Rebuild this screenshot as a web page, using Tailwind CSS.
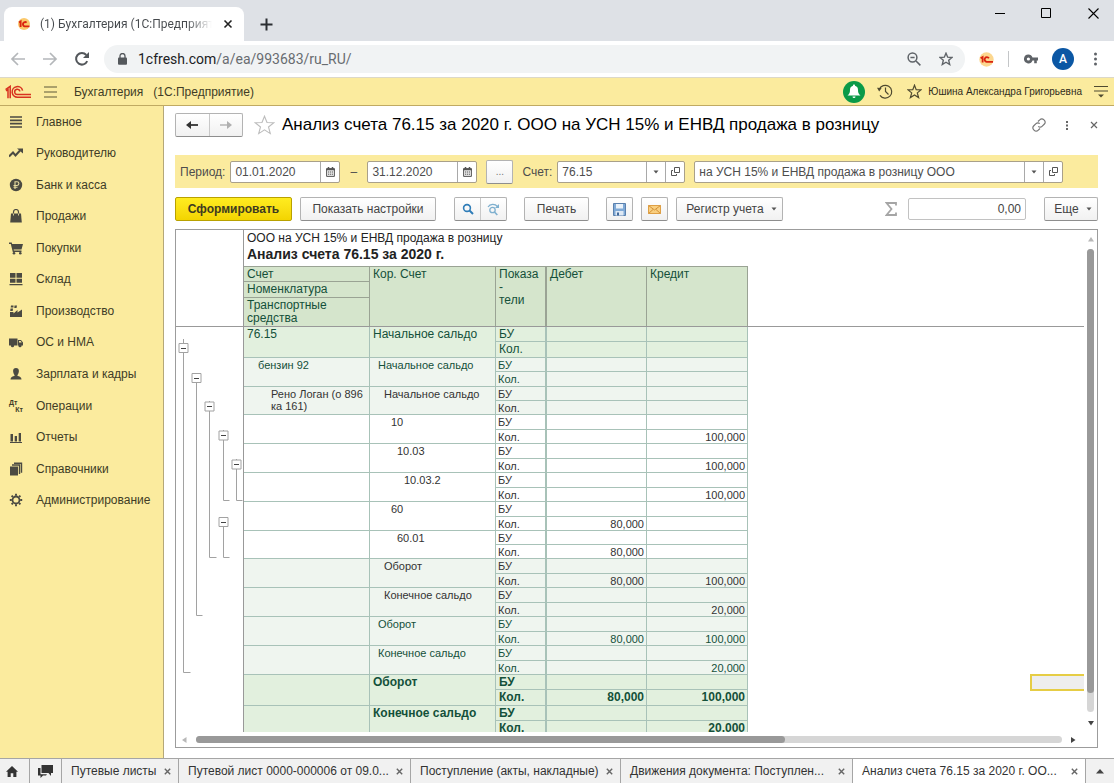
<!DOCTYPE html>
<html lang="ru">
<head>
<meta charset="utf-8">
<title>Анализ счета 76.15</title>
<script src="https://cdn.jsdelivr.net/npm/@tailwindcss/browser@4"></script>
</head>
<body class="flex h-screen flex-col overflow-hidden bg-white font-['Liberation_Sans',Arial,sans-serif] text-[13px] text-[#444]">

<!-- Browser tab strip -->
<div class="flex h-[41px] shrink-0 items-end bg-[#dee1e6] pl-1 font-[Roboto,sans-serif]">
  <div class="flex h-[34px] w-60 items-center rounded-t-lg bg-white pl-3.5 pr-2.5 text-xs text-[#45494d]">
    <svg class="mr-2.5 shrink-0" width="12" height="12" viewBox="0 0 12 12"><circle cx="6" cy="6" r="6" fill="#fbc96b"/><path d="M1 4.500 2.600 3.500V9M8.600 4.600A2.200 2.200 0 1 0 6.600 8.400H11.500" fill="none" stroke="#d9230f" stroke-width="1.900"/></svg>
    <span class="flex-1 overflow-hidden whitespace-nowrap bg-linear-to-r from-[#45494d] from-85% to-transparent bg-clip-text text-transparent">(1) Бухгалтерия (1С:Предприятие)</span>
    <button class="ml-2.5" aria-label="Закрыть вкладку"><svg width="12" height="12" viewBox="0 0 12 12"><path d="m2.500 2.500 7 7m0-7-7 7" stroke="#222" stroke-width="1.600"/></svg></button>
  </div>
  <button class="mb-[10px] ml-4" aria-label="Новая вкладка"><svg width="13" height="13" viewBox="0 0 13 13"><path d="M6.500.500v12m-6-6h12" stroke="#2b2e32" stroke-width="2"/></svg></button>
  <div class="mb-[22px] ml-auto mr-[15px] flex items-center gap-9">
    <button aria-label="Свернуть"><svg width="10" height="11" viewBox="0 0 10 11"><path d="M0 5.500h10" stroke="#000"/></svg></button>
    <button aria-label="Развернуть"><svg width="11" height="11" viewBox="0 0 11 11"><path d="M.5.500h9v9h-9z" fill="none" stroke="#000"/></svg></button>
    <button aria-label="Закрыть"><svg width="11" height="11" viewBox="0 0 11 11"><path d="m.5.500 10 10m0-10-10 10" stroke="#000" stroke-width="1.100"/></svg></button>
  </div>
</div>

<!-- Address bar -->
<div class="flex h-9 shrink-0 items-center pl-[10px] pr-3 font-[Roboto,sans-serif]">
  <button aria-label="Назад"><svg width="16" height="16" viewBox="0 0 16 16"><path d="M15 8H2m6-6L2 8l6 6" fill="none" stroke="#b4b7ba" stroke-width="1.700"/></svg></button>
  <button class="ml-4" aria-label="Вперед"><svg width="16" height="16" viewBox="0 0 16 16"><path d="M1 8h13M8 2l6 6-6 6" fill="none" stroke="#b4b7ba" stroke-width="1.700"/></svg></button>
  <button class="ml-4" aria-label="Обновить"><svg width="16" height="16" viewBox="0 0 16 16"><path d="M13.200 10.200A5.800 5.800 0 1 1 12.300 4" fill="none" stroke="#53575b" stroke-width="2"/><path d="M15 1v6H9z" fill="#53575b"/></svg></button>
  <label class="ml-[14px] flex h-7 flex-1 items-center rounded-full bg-[#f1f3f4] pl-3.5 pr-3">
    <svg class="mr-[11px]" width="9" height="12" viewBox="0 0 9 12"><rect y="4.400" width="9" height="7.400" rx="1" fill="#54585c"/><path d="M2 5V3a2.500 2.500 0 0 1 5 0v2" fill="none" stroke="#54585c" stroke-width="1.300"/></svg>
    <span class="flex-1 text-sm text-[#686c70]"><span class="text-[#202124]">1cfresh.com</span>/a/ea/993683/ru_RU/</span>
    <svg width="14" height="14" viewBox="0 0 14 14" fill="none" stroke="#5f6368" stroke-width="1.500"><circle cx="5.500" cy="5.500" r="4.400"/><path d="m9 9 4.400 4.400M3.400 5.500h4.200"/></svg>
    <svg class="ml-[18px]" width="14" height="14" viewBox="0 0 14 14"><path d="m7 1.200 1.700 4 4.300.3-3.300 2.800 1 4.200L7 10.200l-3.700 2.300 1-4.200L1 5.500l4.300-.3z" fill="none" stroke="#5f6368" stroke-width="1.400"/></svg>
  </label>
  <svg class="ml-[14px]" width="15" height="15" viewBox="0 0 15 15"><circle cx="7.500" cy="7.500" r="7.200" fill="#fcd78f"/><path d="M1.600 6.200 3.600 5v5.400M9.900 6.300a2.300 2.300 0 1 0-2.200 3.500H14" fill="none" stroke="#d9230f" stroke-width="1.800"/></svg>
  <span class="ml-[14px] h-4 w-px bg-[#c4c6c8]"></span>
  <svg class="ml-[15px]" width="14" height="10" viewBox="0 0 14 10"><path fill-rule="evenodd" d="M4.400.6a4.400 4.400 0 1 0 4.100 5.900h1.700v2.700h2.600V6.500H14v-3H8.500A4.400 4.400 0 0 0 4.400.6M4.400 3.400a1.600 1.600 0 1 1 0 3.200 1.600 1.600 0 0 1 0-3.200" fill="#5f6368"/></svg>
  <button class="ml-[14px] size-[22px] rounded-full bg-[#0b57a4] text-xs font-medium text-white">A</button>
  <button class="ml-[17px]" aria-label="Меню"><svg width="11" height="14" viewBox="0 0 11 14" fill="#5f6368"><circle cx="4.500" cy="2" r="1.500"/><circle cx="4.500" cy="7" r="1.500"/><circle cx="4.500" cy="12" r="1.500"/></svg></button>
</div>

<!-- Application header -->
<header class="flex h-[29px] shrink-0 items-center border-b border-t border-b-[#c0aa62] border-t-[#dcd8c8] bg-[#fbeb9e] pl-[5px] pr-[6px]">
  <svg width="26" height="14" viewBox="0 0 26 14" fill="none" stroke="#d8321f" stroke-width="1.500"><path d="M.5 4.500 5.200 1.300V13.300M1 5.800 3 4.600V13.300"/><path d="M17.600 5.600A5.300 5.300 0 1 0 12.600 12.200H26"/><path d="M15 6.300A2.700 2.700 0 1 0 12.600 9.600H26"/></svg>
  <button class="ml-[13px]" aria-label="Меню функций"><svg width="13" height="12" viewBox="0 0 13 12"><path d="M0 1h13M0 6h13M0 11h13" stroke="#5d5838" stroke-width="1.200"/></svg></button>
  <span class="ml-[17px] text-xs text-[#403c26]">Бухгалтерия&nbsp;&nbsp; (1С:Предприятие)</span>
  <button class="ml-auto flex size-[22px] items-center justify-center rounded-full bg-[#0a9a48]" aria-label="Уведомления"><svg width="14" height="15" viewBox="0 0 14 15" fill="#fff"><path d="M7 .5c.8 0 1 .6 1 1.200 2.200.6 3 2.300 3 4.300 0 3 .8 4 2.500 5.500H.5C2.200 10 3 9 3 6c0-2 .8-3.700 3-4.300C6 1.100 6.200.5 7 .5M5.500 12.500h3a1.500 1.500 0 0 1-3 0"/></svg></button>
  <button class="ml-3" aria-label="История"><svg width="16" height="15" viewBox="0 0 16 15" fill="none" stroke="#4f4a30" stroke-width="1.200"><path d="M2.300 5.500A6.400 6.400 0 1 1 3 11.300M8.500 3.500v4l3 3"/><path d="M0 3.800 4.600 4 2.200 7.400z" fill="#4f4a30" stroke="none"/></svg></button>
  <button class="ml-[14px]" aria-label="Избранное"><svg width="15" height="15" viewBox="0 0 15 15"><path d="m7.500 1.200 1.700 4.500 4.800.2-3.700 3 1.300 4.700-4.100-2.700-4.100 2.700 1.300-4.700-3.700-3 4.800-.2z" fill="none" stroke="#4f4a30" stroke-width="1.200"/></svg></button>
  <span class="ml-[6px] text-[10px] text-[#2f2b1b]">Юшина Александра Григорьевна</span>
  <button class="ml-[12px]" aria-label="Настройки"><svg width="14" height="13" viewBox="0 0 14 13"><path d="M0 1.500h14M0 6h14" stroke="#4f4a30" stroke-width="1.200"/><path d="M4 9.500h6l-3 3z" fill="#4f4a30"/></svg></button>
</header>

<div class="flex min-h-0 flex-1">
  <!-- Sections -->
  <nav class="w-[164px] shrink-0 border-r border-[#b5a878] bg-[#fbeb9e] text-xs text-[#403c26]">
    <div class="flex h-[410px] flex-col [&>a]:flex [&>a]:flex-1 [&>a]:items-center [&>a]:gap-[13px] [&>a]:pl-[9px] [&_svg]:shrink-0">
      <a href="#"><svg width="14" height="14" viewBox="0 0 14 14"><path d="M1 2h12M1 5.300h12M1 8.600h12M1 12h12" stroke="#4b4a42" stroke-width="1.700"/></svg>Главное</a>
      <a href="#"><svg width="14" height="14" viewBox="0 0 14 14"><path d="m0 10.500 4-4 2.500 3L11 4.500" fill="none" stroke="#4b4a42" stroke-width="2"/><path d="M8 2.500h6v5z" fill="#4b4a42"/></svg>Руководителю</a>
      <a href="#"><svg width="14" height="14" viewBox="0 0 14 14"><circle cx="7" cy="7" r="6.200" fill="#4b4a42"/><path d="M6 11V3.700h2a1.900 1.900 0 0 1 0 3.800H4.500M4.500 9.200h4" fill="none" stroke="#e8dca0" stroke-width="1.100"/></svg>Банк и касса</a>
      <a href="#"><svg width="14" height="14" viewBox="0 0 14 14"><path d="M2 4.500h10l.8 9H1.200z" fill="#4b4a42"/><path d="M4.500 6.500V3a2.500 2.500 0 0 1 5 0v3.500" fill="none" stroke="#4b4a42" stroke-width="1.200"/><path d="M4.500 4.500v2M9.500 4.500v2" stroke="#d8cc94"/></svg>Продажи</a>
      <a href="#"><svg width="14" height="14" viewBox="0 0 14 14" fill="#4b4a42"><path d="M0 1.500h2.700l.5 1.500H14l-1.500 5.500H4.600l.3 1h7.600V11H3.800L1.800 3H0z"/><circle cx="5" cy="12.300" r="1.300"/><circle cx="11.300" cy="12.300" r="1.300"/></svg>Покупки</a>
      <a href="#"><svg width="14" height="14" viewBox="0 0 14 14" fill="#4b4a42"><path d="M1 1h5.500v4.700H1zM7.500 1H13v4.700H7.500zM1 6.700h5.500v4H1zM7.500 6.700H13v4H7.500zM.5 12h13v1.300H.5z"/></svg>Склад</a>
      <a href="#"><svg width="14" height="14" viewBox="0 0 14 14" fill="#4b4a42"><path d="M1 8h3.500v1.500L8.500 6v2.500L13 5.500V13H1zM1.500 4.500h2.500l-.3 2.500H1.200zM2 1.500h2.500v2H1.700zM5.500 1.500H8L7.500 4H5.300z"/></svg>Производство</a>
      <a href="#"><svg width="14" height="14" viewBox="0 0 14 14" fill="#4b4a42"><path d="M0 3.500h8.500v7H0zM9 5h3l2 2.500v3H9z"/><circle cx="3.500" cy="10.700" r="1.600"/><circle cx="11" cy="10.700" r="1.600"/><path d="M10 6h1.700l1 1.500H10z" fill="#fbeb9e"/></svg>ОС и НМА</a>
      <a href="#"><svg width="14" height="14" viewBox="0 0 14 14" fill="#4b4a42"><path d="M7 1c1.900 0 2.900 1.300 2.900 3S8.900 7.600 8.500 8v1c2 .3 4 1 4 3.500h-11C1.500 10 3.500 9.300 5.500 9V8C5.100 7.600 4.100 5.700 4.100 4S5.100 1 7 1"/></svg>Зарплата и кадры</a>
      <a href="#"><span class="flex w-3.5 flex-col text-[7px]/[7px] font-bold"><span>Дт</span><span class="self-end">Кт</span></span>Операции</a>
      <a href="#"><svg width="14" height="14" viewBox="0 0 14 14" fill="#4b4a42"><path d="M1.500 4H4v7.500H1.500zM5.700 6H8v5.500H5.700zM9.700 3H12v8.500H9.700zM1 12h12v1H1z"/></svg>Отчеты</a>
      <a href="#"><svg width="14" height="14" viewBox="0 0 14 14"><path d="M1 4.500h8v9H1z" fill="#4b4a42"/><path d="M3 3h7.500v9M5 1.200h7.500v9.500" fill="none" stroke="#4b4a42" stroke-width="1.400"/></svg>Справочники</a>
      <a href="#"><svg width="14" height="14" viewBox="0 0 14 14" fill="none" stroke="#4b4a42"><circle cx="7" cy="7" r="3.500" stroke-width="1.800"/><path d="M7 .8v2M7 11.200v2M.8 7h2M11.200 7h2M2.600 2.600 4 4M10 10l1.400 1.400M2.600 11.400 4 10M10 4l1.400-1.400" stroke-width="1.900"/></svg>Администрирование</a>
    </div>
  </nav>

  <main class="flex min-w-0 flex-1 flex-col pb-[10px] pl-[11px] pr-4">
    <!-- Form title -->
    <div class="flex h-[38px] shrink-0 items-center">
      <div class="flex h-6 w-[68px] rounded-xs border border-[#b3b3b3] border-b-[#8e8e8e] bg-linear-to-b from-white to-[#f1f1f1]">
        <button class="flex flex-1 items-center justify-center border-r border-[#c8c8c8]" aria-label="Назад"><svg width="12" height="8" viewBox="0 0 12 8"><path d="M12 4H2" stroke="#333" stroke-width="1.800"/><path d="M5 0v8L0 4z" fill="#333"/></svg></button>
        <button class="flex flex-1 items-center justify-center" aria-label="Вперед"><svg width="12" height="8" viewBox="0 0 12 8"><path d="M0 4h10" stroke="#b0b0b0" stroke-width="1.400"/><path d="M7 0v8l5-4z" fill="#b0b0b0"/></svg></button>
      </div>
      <button class="ml-[11px]" aria-label="В избранное"><svg width="21" height="20" viewBox="0 0 21 20"><path d="m10.500 1.200 2.500 6.300 6.800.3-5.300 4.200 1.800 6.600-5.800-3.800-5.800 3.800L6.500 12 1.200 7.800 8 7.500z" fill="none" stroke="#bdbdbd" stroke-width="1.100"/></svg></button>
      <h1 class="ml-[7px] whitespace-nowrap text-[17px] text-black">Анализ счета 76.15 за 2020 г. ООО на УСН 15% и ЕНВД продажа в розницу</h1>
      <button class="ml-auto" aria-label="Ссылка"><svg width="14" height="14" viewBox="0 0 14 14" fill="none" stroke="#777" stroke-width="1.200"><path d="M6 3.500 8 1.600a2.600 2.600 0 0 1 3.700 0l.7.700a2.600 2.600 0 0 1 0 3.700L10 8.400a2.600 2.600 0 0 1-3.700 0"/><path d="M8 10.500l-2 1.900a2.600 2.600 0 0 1-3.700 0l-.7-.7a2.600 2.600 0 0 1 0-3.700L4 5.600a2.600 2.600 0 0 1 3.700 0"/></svg></button>
      <button class="ml-[18px]" aria-label="Еще действия"><svg width="6" height="11" viewBox="0 0 6 11" fill="#666"><path d="M2 1h2v2H2zM2 4.500h2v2H2zM2 8h2v2H2z"/></svg></button>
      <button class="ml-5" aria-label="Закрыть"><svg width="8" height="8" viewBox="0 0 8 8"><path d="m1 1 6 6m0-6-6 6" stroke="#666" stroke-width="1.200"/></svg></button>
    </div>

    <!-- Filter -->
    <div class="mt-[11px] flex h-[33px] shrink-0 items-center bg-[#fbeb9e] pl-[5px] pr-[35px] text-xs text-[#4d4d4d] [&_input]:min-w-0 [&_input]:flex-1 [&_input]:pl-1 [&_input]:outline-none">
      <label for="d1">Период:</label>
      <div class="ml-[5px] flex h-[22px] w-[110px] rounded-xs border border-[#a9a08a] bg-white">
        <input id="d1" value="01.01.2020">
        <button class="flex w-[19px] items-center justify-center border-l border-[#a9a9a9]" aria-label="Календарь"><svg width="9" height="10" viewBox="0 0 9 10"><path d="M.6 1.600h7.800v7.800H.6z" fill="#eee" stroke="#555" stroke-width="1"/><path d="M0 2.500h9M2.500 0v2M6.500 0v2" stroke="#555" stroke-width="1.500"/><path d="M2 5h5M2 7.200h5" stroke="#555" stroke-dasharray="1.200 .7"/></svg></button>
      </div>
      <span class="w-[27px] text-center">–</span>
      <div class="flex h-[22px] w-[110px] rounded-xs border border-[#a9a08a] bg-white">
        <input id="d2" aria-label="Конец периода" value="31.12.2020">
        <button class="flex w-[19px] items-center justify-center border-l border-[#a9a9a9]" aria-label="Календарь"><svg width="9" height="10" viewBox="0 0 9 10"><path d="M.6 1.600h7.800v7.800H.6z" fill="#eee" stroke="#555" stroke-width="1"/><path d="M0 2.500h9M2.500 0v2M6.500 0v2" stroke="#555" stroke-width="1.500"/><path d="M2 5h5M2 7.200h5" stroke="#555" stroke-dasharray="1.200 .7"/></svg></button>
      </div>
      <button class="ml-[9px] h-6 w-[27px] rounded-xs border border-[#b3b3b3] border-b-[#8e8e8e] bg-linear-to-b from-white to-[#f1f1f1] text-[10px] text-[#777]">...</button>
      <label class="ml-[9px]" for="acc">Счет:</label>
      <div class="ml-[5px] flex h-[22px] w-[128px] rounded-xs border border-[#a9a08a] bg-white">
        <input id="acc" value="76.15">
        <button class="flex w-[19px] items-center justify-center border-l border-[#a9a9a9]" aria-label="Выбрать"><svg width="6" height="4" viewBox="0 0 6 4"><path d="M.5.500h5L3 3.500z" fill="#555"/></svg></button>
        <button class="flex w-[19px] items-center justify-center border-l border-[#a9a9a9]" aria-label="Открыть"><svg width="9" height="9" viewBox="0 0 9 9" fill="none" stroke="#555"><path d="M3.500.500h5v5h-5z"/><path d="M2 3.500H.5v5h5V7"/></svg></button>
      </div>
      <div class="ml-[9px] flex h-[22px] min-w-0 flex-1 rounded-xs border border-[#a9a08a] bg-white">
        <input id="org" aria-label="Организация" value="на УСН 15% и ЕНВД продажа в розницу ООО">
        <button class="flex w-[19px] items-center justify-center border-l border-[#a9a9a9]" aria-label="Выбрать"><svg width="6" height="4" viewBox="0 0 6 4"><path d="M.5.500h5L3 3.500z" fill="#555"/></svg></button>
        <button class="flex w-[19px] items-center justify-center border-l border-[#a9a9a9]" aria-label="Открыть"><svg width="9" height="9" viewBox="0 0 9 9" fill="none" stroke="#555"><path d="M3.500.500h5v5h-5z"/><path d="M2 3.500H.5v5h5V7"/></svg></button>
      </div>
    </div>

    <!-- Commands -->
    <div class="mt-[9px] flex h-6 shrink-0 text-xs">
      <button class="w-[117px] rounded-xs border border-[#b9a100] bg-linear-to-b from-[#ffec1f] to-[#f3d400] font-bold text-[#3d3a20]">Сформировать</button>
      <button class="ml-2 w-[136px] rounded-xs border border-[#b3b3b3] border-b-[#8e8e8e] bg-linear-to-b from-white to-[#f1f1f1]">Показать настройки</button>
      <div class="ml-[18px] flex w-[53px] rounded-xs border border-[#b3b3b3] border-b-[#8e8e8e] bg-linear-to-b from-white to-[#f1f1f1]">
        <button class="flex flex-1 items-center justify-center border-r border-[#c8c8c8]" aria-label="Найти"><svg width="12" height="12" viewBox="0 0 12 12" fill="none" stroke="#2f7db8"><circle cx="5" cy="5" r="3.400" stroke-width="1.600"/><path d="m7.500 7.500 3.500 3.500" stroke-width="2"/></svg></button>
        <button class="flex flex-1 items-center justify-center" aria-label="Найти далее"><svg width="13" height="13" viewBox="0 0 13 13" fill="none" stroke="#7fb0cf"><circle cx="5.500" cy="7" r="2.700" stroke-width="1.300"/><path d="m7.500 9 2.800 3" stroke-width="1.600"/><path d="M1 4c2-3.500 7-3.500 9.500-.5" stroke-width="1.200"/><path d="M12 1v4H8z" fill="#7fb0cf" stroke="none"/></svg></button>
      </div>
      <button class="ml-[17px] w-[65px] rounded-xs border border-[#b3b3b3] border-b-[#8e8e8e] bg-linear-to-b from-white to-[#f1f1f1]">Печать</button>
      <button class="ml-[17px] flex w-[27px] items-center justify-center rounded-xs border border-[#b3b3b3] border-b-[#8e8e8e] bg-linear-to-b from-white to-[#f1f1f1]" aria-label="Сохранить"><svg width="13" height="13" viewBox="0 0 13 13"><path d="M.5.500h12v12H.5z" fill="#7fa9d6" stroke="#5a80ad"/><path d="M3 1h7v4.500H3z" fill="#eaf2fa"/><path d="M2.500 8h8v4.500h-8z" fill="#dfe9f4"/><path d="M4 9.500h2v3H4z" fill="#41699a"/></svg></button>
      <button class="ml-2 flex w-[27px] items-center justify-center rounded-xs border border-[#b3b3b3] border-b-[#8e8e8e] bg-linear-to-b from-white to-[#f1f1f1]" aria-label="Отправить"><svg width="13" height="9" viewBox="0 0 13 9"><path d="M.5.500h12v8H.5z" fill="#f9cf80" stroke="#dfa045"/><path d="m.5.500 6 4.500 6-4.500M.5 8.500l4.500-4M12.500 8.500 8 4.500" fill="none" stroke="#d3923a"/></svg></button>
      <button class="ml-2 flex w-[107px] items-center justify-center gap-[7px] rounded-xs border border-[#b3b3b3] border-b-[#8e8e8e] bg-linear-to-b from-white to-[#f1f1f1] pl-1">Регистр учета <svg width="6" height="4" viewBox="0 0 6 4"><path d="M.5.500h5L3 3.500z" fill="#555"/></svg></button>
      <label for="sum" class="ml-auto self-center" aria-label="Сумма"><svg width="12" height="14" viewBox="0 0 12 14"><path d="M11 3.500V1H1.500l5 6-5 6H11v-2.500" fill="none" stroke="#a5a5a5" stroke-width="1.800"/></svg></label>
      <input id="sum" class="ml-[11px] h-[22px] w-[118px] self-center rounded-xs border border-[#c2c2c2] pr-1 text-right outline-none" value="0,00">
      <button class="ml-[18px] flex w-[54px] items-center justify-center gap-[7px] rounded-xs border border-[#b3b3b3] border-b-[#8e8e8e] bg-linear-to-b from-white to-[#f1f1f1] pl-1">Еще <svg width="6" height="4" viewBox="0 0 6 4"><path d="M.5.500h5L3 3.500z" fill="#555"/></svg></button>
    </div>

    <!-- Spreadsheet -->
    <div class="mt-2 flex min-h-0 flex-1 flex-col border border-[#9c9c9c]">
      <div class="flex min-h-0 flex-1">
        <div class="relative flex min-w-0 flex-1 items-start overflow-hidden">
          <!-- Row grouping tree -->
          <svg class="shrink-0" width="67" height="502" viewBox="0 0 67 502" fill="none" stroke="#a2a2a2">
            <path d="M7.500 109v333.500h7M20.500 143v242.500h6M33.500 171v156.500h7M47.500 200v70.500h6M60.500 229v41.500h6M47.500 287v40.500h6"/>
            <g fill="#fff"><path d="M3 113.500h9v9H3zM16 143.500h9v9h-9zM29 172h9v9h-9zM43 201h9v9h-9zM56 230h9v9h-9zM43 287.500h9v9h-9z"/></g>
            <path d="M5 118.500h5M18 148.500h5M31 176.500h5M45 205.500h5M58 234.500h5M45 292.500h5" stroke="#444"/>
          </svg>
          <div class="shrink-0 border-l border-[#999]">
            <div class="h-9 pl-[3px] text-[#222]">
              <p class="text-xs/4">ООО на УСН 15% и ЕНВД продажа в розницу</p>
              <p class="text-sm/4 font-bold">Анализ счета 76.15 за 2020 г.</p>
            </div>
            <table class="w-[504px] table-fixed border-separate border-spacing-0 text-left text-[11px]/[12px] text-[#333] [&_td]:border-b [&_td]:border-r [&_td]:border-[#a8c2b8] [&_td]:pb-0 [&_td]:pl-0.5 [&_td]:pr-0.5 [&_td]:pt-px [&_td]:align-top [&_th]:border-b [&_th]:border-r [&_th]:border-[#9aa394] [&_th]:pb-0 [&_th]:pl-[3px] [&_th]:pr-0 [&_th]:pt-px [&_th]:align-top [&_th]:font-normal">
              <colgroup><col class="w-[126px]"><col class="w-[126px]"><col class="w-[51px]"><col class="w-[100px]"><col class="w-[101px]"></colgroup>
              <thead class="bg-[#d5e5cc] text-xs/[13px] text-[#14503a]">
                <tr class="h-4 [&>th]:border-t"><th>Счет</th><th rowspan="3">Кор. Счет</th><th rowspan="3" class="border-r-2!">Показа<br>-<br>тели</th><th rowspan="3">Дебет</th><th rowspan="3">Кредит</th></tr>
                <tr class="h-4"><th>Номенклатура</th></tr>
                <tr class="h-[29px]"><th>Транспортные средства</th></tr>
              </thead>
              <tbody class="bg-[#e2f0de] text-xs/[13px] text-[#14503a] [&_td]:pl-[3px]">
                <tr class="h-[15px]"><td rowspan="2">76.15</td><td rowspan="2">Начальное сальдо</td><td class="border-r-2!">БУ</td><td></td><td></td></tr>
                <tr class="h-4"><td class="border-r-2!">Кол.</td><td></td><td></td></tr>
              </tbody>
              <tbody class="bg-[#eff5ef] text-[#14503a]">
                <tr class="h-3.5"><td rowspan="2"><span class="pl-3">бензин 92</span></td><td rowspan="2"><span class="pl-1.5">Начальное сальдо</span></td><td class="border-r-2!">БУ</td><td></td><td></td></tr>
                <tr class="h-[15px]"><td class="border-r-2!">Кол.</td><td></td><td></td></tr>
              </tbody>
              <tbody class="bg-[#eff5ef]">
                <tr class="h-3.5"><td rowspan="2"><p class="pl-[25px]">Рено Логан (о 896 ка 161)</p></td><td rowspan="2"><span class="pl-3">Начальное сальдо</span></td><td class="border-r-2!">БУ</td><td></td><td></td></tr>
                <tr class="h-3.5"><td class="border-r-2!">Кол.</td><td></td><td></td></tr>
              </tbody>
              <tbody>
                <tr class="h-[15px]"><td rowspan="2"></td><td rowspan="2"><span class="pl-[19px]">10</span></td><td class="border-r-2!">БУ</td><td></td><td></td></tr>
                <tr class="h-3.5"><td class="border-r-2!">Кол.</td><td></td><td class="text-right">100,000</td></tr>
                <tr class="h-[15px]"><td rowspan="2"></td><td rowspan="2"><span class="pl-[25px]">10.03</span></td><td class="border-r-2!">БУ</td><td></td><td></td></tr>
                <tr class="h-3.5"><td class="border-r-2!">Кол.</td><td></td><td class="text-right">100,000</td></tr>
                <tr class="h-[15px]"><td rowspan="2"></td><td rowspan="2"><span class="pl-8">10.03.2</span></td><td class="border-r-2!">БУ</td><td></td><td></td></tr>
                <tr class="h-3.5"><td class="border-r-2!">Кол.</td><td></td><td class="text-right">100,000</td></tr>
                <tr class="h-[15px]"><td rowspan="2"></td><td rowspan="2"><span class="pl-[19px]">60</span></td><td class="border-r-2!">БУ</td><td></td><td></td></tr>
                <tr class="h-3.5"><td class="border-r-2!">Кол.</td><td class="text-right">80,000</td><td></td></tr>
                <tr class="h-3.5"><td rowspan="2"></td><td rowspan="2"><span class="pl-[25px]">60.01</span></td><td class="border-r-2!">БУ</td><td></td><td></td></tr>
                <tr class="h-3.5"><td class="border-r-2!">Кол.</td><td class="text-right">80,000</td><td></td></tr>
              </tbody>
              <tbody class="bg-[#eff5ef]">
                <tr class="h-[15px]"><td rowspan="2"></td><td rowspan="2"><span class="pl-3">Оборот</span></td><td class="border-r-2!">БУ</td><td></td><td></td></tr>
                <tr class="h-3.5"><td class="border-r-2!">Кол.</td><td class="text-right">80,000</td><td class="text-right">100,000</td></tr>
                <tr class="h-[15px]"><td rowspan="2"></td><td rowspan="2"><span class="pl-3">Конечное сальдо</span></td><td class="border-r-2!">БУ</td><td></td><td></td></tr>
                <tr class="h-3.5"><td class="border-r-2!">Кол.</td><td></td><td class="text-right">20,000</td></tr>
              </tbody>
              <tbody class="bg-[#eff5ef] text-[#14503a]">
                <tr class="h-[15px]"><td rowspan="2"></td><td rowspan="2"><span class="pl-1.5">Оборот</span></td><td class="border-r-2!">БУ</td><td></td><td></td></tr>
                <tr class="h-3.5"><td class="border-r-2!">Кол.</td><td class="text-right">80,000</td><td class="text-right">100,000</td></tr>
                <tr class="h-[15px]"><td rowspan="2"></td><td rowspan="2"><span class="pl-1.5">Конечное сальдо</span></td><td class="border-r-2!">БУ</td><td></td><td></td></tr>
                <tr class="h-3.5"><td class="border-r-2!">Кол.</td><td></td><td class="text-right">20,000</td></tr>
              </tbody>
              <tbody class="bg-[#e2f0de] text-xs/[13px] font-bold text-[#14503a] [&_td]:pl-[3px]">
                <tr class="h-[15px]"><td rowspan="2"></td><td rowspan="2">Оборот</td><td class="border-r-2!">БУ</td><td></td><td></td></tr>
                <tr class="h-4"><td class="border-r-2!">Кол.</td><td class="text-right">80,000</td><td class="text-right">100,000</td></tr>
                <tr class="h-[15px]"><td rowspan="2"></td><td rowspan="2">Конечное сальдо</td><td class="border-r-2!">БУ</td><td></td><td></td></tr>
                <tr class="h-4"><td class="border-r-2!">Кол.</td><td></td><td class="text-right">20,000</td></tr>
              </tbody>
            </table>
          </div>
          <!-- Frozen header boundary and selected cell lie over the sheet -->
          <div class="absolute left-0 right-0 top-24 h-px bg-[#999]"></div>
          <div class="absolute bottom-[41px] right-0 h-[17px] w-[54px] border-2 border-r-0 border-[#e6cd45] bg-[#eee]"></div>
        </div>
        <!-- Vertical scroll bar -->
        <div class="flex w-[13px] shrink-0 flex-col items-center pb-1.5 pt-[7px]">
          <svg width="6" height="5" viewBox="0 0 6 5"><path d="M0 4.500h6L3 0z" fill="#b8b8b8"/></svg>
          <div class="mt-[7px] flex w-[7px] flex-1 flex-col rounded-full bg-[#d6d6d6]"><div class="h-[96%] rounded-full bg-[#999]"></div></div>
          <svg class="mt-[9px]" width="6" height="5" viewBox="0 0 6 5"><path d="M0 0h6L3 4.500z" fill="#444"/></svg>
        </div>
      </div>
      <!-- Horizontal scroll bar -->
      <div class="flex h-[15px] shrink-0 items-center pl-[6px] pr-[21px]">
        <svg width="5" height="6" viewBox="0 0 5 6"><path d="M4.500 0v6L0 3z" fill="#b8b8b8"/></svg>
        <div class="ml-[9px] h-[7px] flex-1 rounded-full bg-[#d6d6d6]"><div class="h-full w-[68%] rounded-full bg-[#999]"></div></div>
        <svg class="ml-[9px]" width="5" height="6" viewBox="0 0 5 6"><path d="M0 0v6l4.500-3z" fill="#444"/></svg>
      </div>
    </div>
  </main>
</div>

<!-- Open windows -->
<footer class="flex h-[25px] shrink-0 border-t border-[#a5a5a5] bg-[#f1f1f1] text-xs text-[#333] [&>div]:flex [&>div]:items-center [&>div]:border-r [&>div]:border-[#a5a5a5] [&>div]:pl-[9px] [&>div]:pr-[7px] [&>div>span]:flex-1 [&>div>span]:whitespace-nowrap">
  <button class="flex w-[30px] items-center justify-center border-r border-[#a5a5a5] pr-1.5" aria-label="Начальная страница"><svg width="12" height="11" viewBox="0 0 12 11" fill="#333"><path d="M6 0 12 5.800h-1.600V11H7.300V7.300H4.700V11H1.600V5.800H0z"/></svg></button>
  <button class="flex w-8 items-center justify-center border-r border-[#a5a5a5]" aria-label="Обсуждения"><svg width="15" height="13" viewBox="0 0 15 13" fill="#333"><path d="M3.500 0H15v8h-2v3l-2.500-3h-7z"/><path d="M0 3h2.500v6.200H9L8 10.500H5L2.500 13v-2.500H0z"/></svg></button>
  <div class="w-[117px]"><span>Путевые листы</span><button aria-label="Закрыть"><svg width="7" height="7" viewBox="0 0 7 7"><path d="m.8.800 5.400 5.400m0-5.400L.8 6.200" stroke="#666" stroke-width="1.400"/></svg></button></div>
  <div class="w-[232px]"><span>Путевой лист 0000-000006 от 09.0...</span><button aria-label="Закрыть"><svg width="7" height="7" viewBox="0 0 7 7"><path d="m.8.800 5.400 5.400m0-5.400L.8 6.200" stroke="#666" stroke-width="1.400"/></svg></button></div>
  <div class="w-[210px]"><span>Поступление (акты, накладные)</span><button aria-label="Закрыть"><svg width="7" height="7" viewBox="0 0 7 7"><path d="m.8.800 5.400 5.400m0-5.400L.8 6.200" stroke="#666" stroke-width="1.400"/></svg></button></div>
  <div class="w-[232px]"><span>Движения документа: Поступлен...</span><button aria-label="Закрыть"><svg width="7" height="7" viewBox="0 0 7 7"><path d="m.8.800 5.400 5.400m0-5.400L.8 6.200" stroke="#666" stroke-width="1.400"/></svg></button></div>
  <div class="min-w-0 flex-1 bg-white"><span>Анализ счета 76.15 за 2020 г. ОО...</span><button aria-label="Закрыть"><svg width="7" height="7" viewBox="0 0 7 7"><path d="m.8.800 5.400 5.400m0-5.400L.8 6.200" stroke="#666" stroke-width="1.400"/></svg></button></div>
  <button class="flex w-7 items-center justify-center" aria-label="Список окон"><svg width="8" height="5" viewBox="0 0 8 5"><path d="M0 4.500h8L4 0z" fill="#444"/></svg></button>
</footer>
</body>
</html>
